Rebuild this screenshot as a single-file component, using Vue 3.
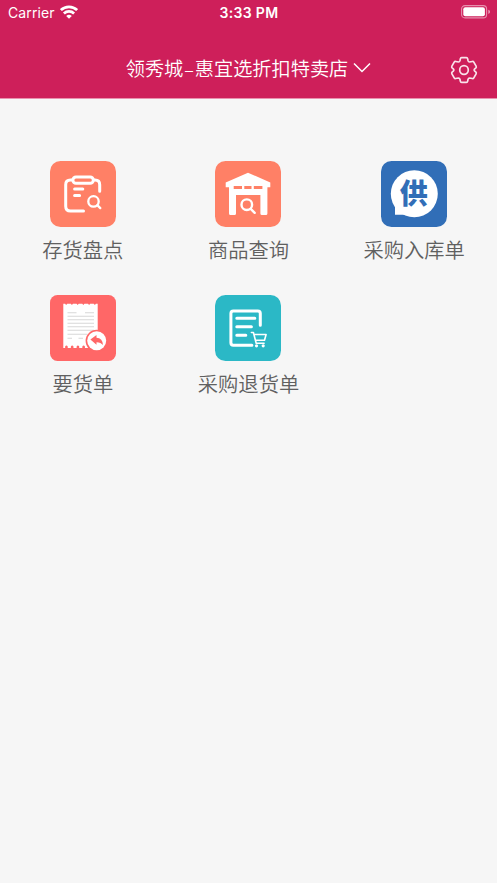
<script setup>
const paper = (() => {
  let d = 'M13.3 8.7'
  const step = 34.4 / 6
  for (let i = 0; i < 6; i++) d += `h1.8l1.07 1.3 1.07 -1.3h${step - 3.94}`
  d += 'V53'
  for (let i = 0; i < 6; i++) d += `h-1.3v-1.6q-1.3 -1.8 -2.6 0v1.6h-${step - 3.9}`
  return d + 'Z'
})()
const items = [
  { icon: 'check', label: '存货盘点', color: '#ff8066' },
  { icon: 'store', label: '商品查询', color: '#ff8066' },
  { icon: 'supply', label: '采购入库单', color: '#316eb7' },
  { icon: 'request', label: '要货单', color: '#ff6767' },
  { icon: 'return', label: '采购退货单', color: '#2bb8c6' },
]
</script>

<template>
  <div class="screen">
    <header class="header">
      <div class="status">
        <div class="carrier">
          <span>Carrier</span>
          <svg width="18" height="14" viewBox="0 0 18 14" fill="none" stroke="#fff" stroke-width="2.7">
            <path d="M.9 5.1a11.6 11.6 0 0 1 16.2 0" />
            <path d="M3.9 8.5a7.3 7.3 0 0 1 10.2 0" />
            <path d="M9 13.8 6.2 11a4 4 0 0 1 5.6 0Z" fill="#fff" stroke="none" />
          </svg>
        </div>
        <div class="time">3:33 PM</div>
        <svg class="battery" width="30" height="14" viewBox="0 0 30 14">
          <rect x=".6" y=".6" width="25" height="12.3" rx="3.4" fill="none" stroke="#fff" stroke-opacity=".5" stroke-width="1.1" />
          <rect x="2.3" y="2.3" width="21.6" height="8.9" rx="2" fill="#fff" />
          <path d="M27.4 4.7q1.6.6 1.6 2.1t-1.6 2.1Z" fill="#fff" fill-opacity=".6" />
        </svg>
      </div>
      <div class="nav">
        <div class="title">
          <span>领秀城<span class="dash">–</span>惠宜选折扣特卖店</span>
          <svg width="18" height="12" viewBox="0 0 18 12" fill="none" stroke="#fff" stroke-width="1.5">
            <path d="m1 1.5 8 8 8-8" />
          </svg>
        </div>
        <svg class="gear" width="28" height="28" viewBox="0 0 28 28" fill="none" stroke="#fff" stroke-opacity=".88" stroke-width="1.7" stroke-linejoin="round">
          <path d="M11.6 1.6h4.8q1 0 1.2 1l.5 2.3q.3 1.1 1.4 1.1l2.8-.5q1-.2 1.5.7l2.3 4q.5.9-.2 1.6l-1.4 1.3q-.8.9 0 1.8l1.4 1.3q.7.7.2 1.6l-2.3 4q-.5.9-1.5.7l-2.8-.5q-1.1 0-1.4 1.1l-.5 2.3q-.2 1-1.2 1h-4.8q-1 0-1.2-1l-.5-2.3q-.3-1.1-1.4-1.1l-2.8.5q-1 .2-1.5-.7l-2.3-4q-.5-.9.2-1.6l1.4-1.3q.8-.9 0-1.8l-1.4-1.3q-.7-.7-.2-1.6l2.3-4q.5-.9 1.5-.7l2.8.5q1.1 0 1.4-1.1l.5-2.3q.2-1 1.2-1Z" />
          <circle cx="14" cy="14" r="4.3" />
        </svg>
      </div>
    </header>

    <main class="grid">
      <div v-for="item in items" :key="item.label" class="item">
        <svg class="icon" width="66" height="66" viewBox="0 0 66 66" fill="none" stroke-linecap="round" stroke-linejoin="round">
          <rect width="66" height="66" :rx="item.icon === 'request' ? 7.5 : 10.5" :fill="item.color" />
          <g v-if="item.icon === 'check'" stroke="#fff" stroke-width="3">
            <path d="M22 19h-1.5q-4.8 0-4.8 4.8v21.4q0 4.8 4.8 4.8h13M44 19h1q4.7 0 4.7 4.8v6.5" />
            <rect x="22.9" y="16" width="20.4" height="6.3" rx="3.1" />
            <path d="M24.6 28h8.2M24.6 34.5h5" />
            <circle cx="43.5" cy="40.4" r="5.2" stroke-width="2.3" />
            <path d="m47.3 44.2 3 2.9" stroke-width="2.3" />
          </g>
          <g v-else-if="item.icon === 'store'">
            <path d="M33 11.7 55.3 21.6V26.2H52.4V52.5q0 1.5-1.5 1.5h-4q-1.5 0-1.5-1.5V34H21V52.5q0 1.5-1.5 1.5h-4q-1.5 0-1.5-1.5V26.2H10.7V21.6Z" fill="#fff" />
            <path d="M18.7 24.9H27V28h-8.3ZM29.3 24.9h7.2V28h-7.2ZM38.8 24.9h8.6V28h-8.6Z" :fill="item.color" />
            <circle cx="31.8" cy="43.7" r="5.3" stroke="#fff" stroke-width="2.4" />
            <path d="m35.7 47.8 4 4" stroke="#fff" stroke-width="2.4" />
          </g>
          <g v-else-if="item.icon === 'supply'">
            <circle cx="33.3" cy="32.8" r="23.5" fill="#fff" />
            <path d="M14 42v11.7h12l2-8Z" fill="#fff" />
            <text class="glyph" x="32.8" y="42.6" text-anchor="middle" :fill="item.color">供</text>
          </g>
          <g v-else-if="item.icon === 'request'">
            <path :d="paper" fill="#fff" />
            <path d="M17.5 17.8h9M35 17.8h9M17.5 21.3h26.5M17.5 24.8h26.5M17.5 28.3h26.5M17.5 31.8h26.5M17.5 35.3h26.5M17.5 39.2h20M17.5 43.3h4.5M28.5 43.3h4.5" stroke="#d8d8d8" stroke-width="1.1" stroke-linecap="butt" />
            <circle cx="46.7" cy="45.8" r="11.1" :fill="item.color" />
            <circle cx="46.7" cy="45.8" r="9.5" fill="#fff" />
            <path d="m40.4 44.6 6.1-4.6v2.7q6.2.4 6.5 7.4-2.3-3-6.5-2.9v2.5Z" :fill="item.color" />
          </g>
          <g v-else stroke="#fff" stroke-width="3">
            <path d="M45.3 30.3V18.5q0-2.5-2.5-2.5H18.4q-2.5 0-2.5 2.5v29.3q0 2.5 2.5 2.5h18.5" />
            <path d="M21.8 23.3h18M21.8 31.7h14.6M21.8 40.3h9" />
            <path d="M36.4 37.5h2l2.8 10.7h7.9M38.9 39.5h12.2l-1.6 5.7h-9.1" stroke-width="1.6" />
            <circle cx="41.5" cy="50.8" r="1.6" fill="#fff" stroke="none" />
            <circle cx="48.2" cy="50.8" r="1.6" fill="#fff" stroke="none" />
          </g>
        </svg>
        <div class="label">{{ item.label }}</div>
      </div>
    </main>
  </div>
</template>

<style>
body {
  background: #f6f6f6;
}
</style>

<style scoped>
.screen {
  min-height: 883px;
  background: #f6f6f6;
  font-family: Inter, "Noto Sans CJK SC", sans-serif;
}
.header {
  height: 99px;
  box-sizing: border-box;
  background: #ce1f5a;
  border-bottom: 1px solid #e991ae;
  color: #fff;
}
.status {
  height: 26px;
  display: grid;
  grid-template-columns: 1fr auto 1fr;
  align-items: center;
  padding: 0 7px 0 8px;
}
.carrier {
  display: flex;
  align-items: center;
  gap: 5px;
  font-size: 14px;
  line-height: 20px;
  letter-spacing: 0.1px;
}
.carrier svg {
  margin-bottom: 2px;
}
.time {
  font-size: 14px;
  font-weight: 600;
  line-height: 20px;
  letter-spacing: 0.3px;
}
.battery {
  justify-self: end;
  margin: 0 -1px 2px 0;
}
.nav {
  height: 72px;
  display: grid;
  grid-template-columns: 1fr auto 1fr;
  padding: 0 19px;
}
.title {
  grid-column: 2;
  display: flex;
  align-items: center;
  height: 84px;
  gap: 5px;
  font-family: "Noto Sans CJK SC", sans-serif;
  font-size: 19.2px;
  font-weight: 350;
  line-height: 28px;
}
.dash {
  display: inline-block;
  width: 11.5px;
  text-align: center;
  font-family: Inter, sans-serif;
  font-size: 16px;
  line-height: 16px;
}
.gear {
  justify-self: end;
  margin-top: 30px;
}
.grid {
  display: grid;
  grid-template-columns: repeat(3, 1fr);
  row-gap: 34px;
  padding-top: 62px;
}
.item {
  height: 100px;
  display: flex;
  flex-direction: column;
  align-items: center;
}
.icon {
  flex: none;
}
.label {
  margin-top: 7px;
  font-family: "Noto Sans CJK SC", sans-serif;
  font-size: 20.3px;
  font-weight: 350;
  line-height: 30px;
  color: #606060;
}
.glyph {
  font-family: "Noto Sans CJK SC", sans-serif;
  font-size: 28px;
  font-weight: 900;
}
</style>
